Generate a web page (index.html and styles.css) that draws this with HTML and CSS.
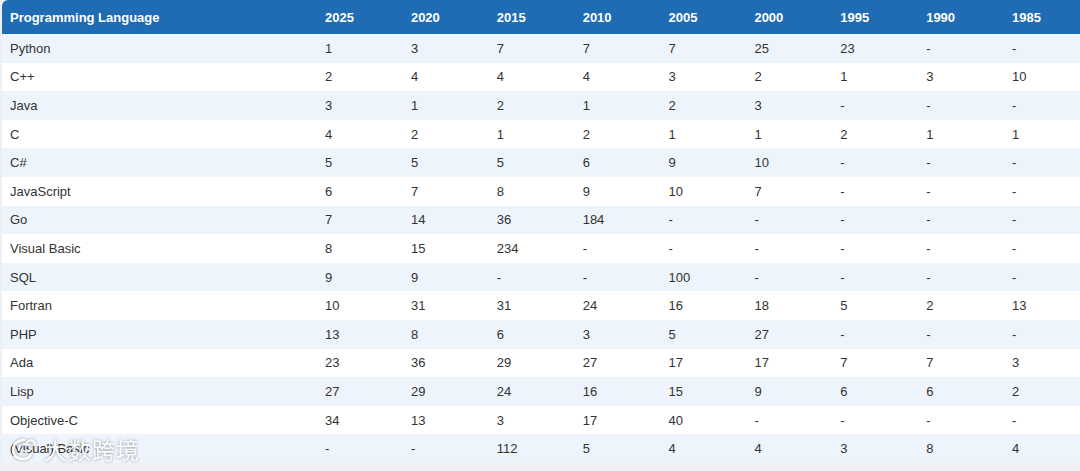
FILE: index.html
```html
<!DOCTYPE html>
<html lang="en">
<head>
<meta charset="utf-8">
<title>Programming Language Rankings</title>
<link rel="stylesheet" href="styles.css">
</head>
<body>
<div class="frame">
  <table class="rank-table">
    <colgroup>
      <col class="col-lang">
      <col class="col-year"><col class="col-year"><col class="col-year">
      <col class="col-year"><col class="col-year"><col class="col-year">
      <col class="col-year"><col class="col-year"><col class="col-year">
    </colgroup>
    <thead>
      <tr>
        <th>Programming Language</th><th>2025</th><th>2020</th><th>2015</th><th>2010</th><th>2005</th><th>2000</th><th>1995</th><th>1990</th><th>1985</th>
      </tr>
    </thead>
    <tbody>
      <tr><td>Python</td><td>1</td><td>3</td><td>7</td><td>7</td><td>7</td><td>25</td><td>23</td><td>-</td><td>-</td></tr>
      <tr><td>C++</td><td>2</td><td>4</td><td>4</td><td>4</td><td>3</td><td>2</td><td>1</td><td>3</td><td>10</td></tr>
      <tr><td>Java</td><td>3</td><td>1</td><td>2</td><td>1</td><td>2</td><td>3</td><td>-</td><td>-</td><td>-</td></tr>
      <tr><td>C</td><td>4</td><td>2</td><td>1</td><td>2</td><td>1</td><td>1</td><td>2</td><td>1</td><td>1</td></tr>
      <tr><td>C#</td><td>5</td><td>5</td><td>5</td><td>6</td><td>9</td><td>10</td><td>-</td><td>-</td><td>-</td></tr>
      <tr><td>JavaScript</td><td>6</td><td>7</td><td>8</td><td>9</td><td>10</td><td>7</td><td>-</td><td>-</td><td>-</td></tr>
      <tr><td>Go</td><td>7</td><td>14</td><td>36</td><td>184</td><td>-</td><td>-</td><td>-</td><td>-</td><td>-</td></tr>
      <tr><td>Visual Basic</td><td>8</td><td>15</td><td>234</td><td>-</td><td>-</td><td>-</td><td>-</td><td>-</td><td>-</td></tr>
      <tr><td>SQL</td><td>9</td><td>9</td><td>-</td><td>-</td><td>100</td><td>-</td><td>-</td><td>-</td><td>-</td></tr>
      <tr><td>Fortran</td><td>10</td><td>31</td><td>31</td><td>24</td><td>16</td><td>18</td><td>5</td><td>2</td><td>13</td></tr>
      <tr><td>PHP</td><td>13</td><td>8</td><td>6</td><td>3</td><td>5</td><td>27</td><td>-</td><td>-</td><td>-</td></tr>
      <tr><td>Ada</td><td>23</td><td>36</td><td>29</td><td>27</td><td>17</td><td>17</td><td>7</td><td>7</td><td>3</td></tr>
      <tr><td>Lisp</td><td>27</td><td>29</td><td>24</td><td>16</td><td>15</td><td>9</td><td>6</td><td>6</td><td>2</td></tr>
      <tr><td>Objective-C</td><td>34</td><td>13</td><td>3</td><td>17</td><td>40</td><td>-</td><td>-</td><td>-</td><td>-</td></tr>
      <tr><td>(Visual) Basic</td><td>-</td><td>-</td><td>112</td><td>5</td><td>4</td><td>4</td><td>3</td><td>8</td><td>4</td></tr>
    </tbody>
  </table>
  <div class="watermark">
    <svg class="wm-logo" width="28" height="26" viewBox="0 0 28 26" aria-hidden="true">
      <path d="M14 4 C7 4 3 9 3 14 C3 20 8 23 13 23 C17 23 20 21 21 18" fill="none" stroke="#fff" stroke-width="2.4" stroke-linecap="round"/>
      <path d="M9 14 C9 10 12 8 15 8 C19 8 22 11 20 14 C18 16 14 16 12 14" fill="none" stroke="#fff" stroke-width="2.2" stroke-linecap="round"/>
      <path d="M17 6 C20 3 25 4 25 9" fill="none" stroke="#fff" stroke-width="2.2" stroke-linecap="round"/>
    </svg>
    <span class="wm-text">大数跨境</span>
  </div>
</div>
</body>
</html>
```

FILE: styles.css
```css
html, body {
  margin: 0;
  padding: 0;
}
body {
  width: 1080px;
  height: 471px;
  overflow: hidden;
  background: #eef0f3;
  font-family: "Liberation Sans", Arial, sans-serif;
  font-size: 13px;
  color: #333;
}
.frame {
  position: relative;
  padding-left: 2px;
}
.rank-table {
  border-collapse: separate;
  border-spacing: 0;
  table-layout: fixed;
  width: 1088px;
}
.col-lang { width: 315px; }
.col-year { width: 85.875px; }
.rank-table th {
  background: #1f6bb4;
  color: #fff;
  font-weight: bold;
  text-align: left;
  height: 34px;
  padding: 0 8px;
  box-sizing: border-box;
}
.rank-table th:first-child {
  border-top-left-radius: 6px;
}
.rank-table td {
  height: 28.6px;
  padding: 0 8px;
  box-sizing: border-box;
  text-align: left;
  background: #fff;
}
.rank-table tbody tr:nth-child(odd) td {
  background: #eef4fb;
}
.watermark {
  position: absolute;
  left: 10px;
  top: 436px;
  display: flex;
  align-items: center;
  gap: 6px;
  opacity: 0.85;
  filter: drop-shadow(0 0 1.5px rgba(0,0,0,0.45));
}
.wm-text {
  font-family: "Noto Sans CJK SC", sans-serif;
  font-size: 23px;
  line-height: 26px;
  color: #fff;
  letter-spacing: 1px;
}
```
